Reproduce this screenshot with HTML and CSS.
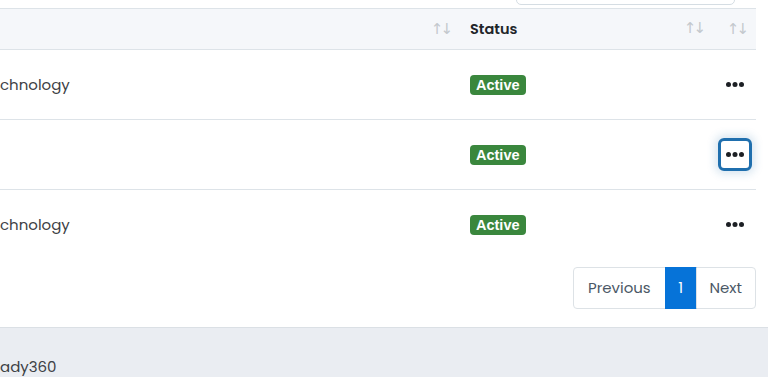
FILE: index.html
```
<!DOCTYPE html>
<html lang="en">
<head>
    <meta charset="UTF-8">
    <title>Departments</title>
    <link rel="stylesheet" href="styles.css">
</head>
<body>
    <div class="content">
        <div class="table-toolbar">
            <input type="search" class="search-input" aria-label="Search">
        </div>

        <table class="data-table">
            <thead>
                <tr>
                    <th class="col-name"><span class="sort-icon">↑↓</span></th>
                    <th class="col-status">Status<span class="sort-icon">↑↓</span></th>
                    <th class="col-action"><span class="sort-icon">↑↓</span></th>
                </tr>
            </thead>
            <tbody>
                <tr>
                    <td class="col-name">chnology</td>
                    <td class="col-status"><span class="badge-active">Active</span></td>
                    <td class="col-action">
                        <button class="action-button">
                            <svg width="18" height="5" viewBox="0 0 18 5"><circle cx="2.5" cy="2.5" r="2.5"/><circle cx="9" cy="2.5" r="2.5"/><circle cx="15.5" cy="2.5" r="2.5"/></svg>
                        </button>
                    </td>
                </tr>
                <tr>
                    <td class="col-name"></td>
                    <td class="col-status"><span class="badge-active">Active</span></td>
                    <td class="col-action">
                        <button class="action-button focused">
                            <svg width="18" height="5" viewBox="0 0 18 5"><circle cx="2.5" cy="2.5" r="2.5"/><circle cx="9" cy="2.5" r="2.5"/><circle cx="15.5" cy="2.5" r="2.5"/></svg>
                        </button>
                    </td>
                </tr>
                <tr>
                    <td class="col-name">chnology</td>
                    <td class="col-status"><span class="badge-active">Active</span></td>
                    <td class="col-action">
                        <button class="action-button">
                            <svg width="18" height="5" viewBox="0 0 18 5"><circle cx="2.5" cy="2.5" r="2.5"/><circle cx="9" cy="2.5" r="2.5"/><circle cx="15.5" cy="2.5" r="2.5"/></svg>
                        </button>
                    </td>
                </tr>
            </tbody>
        </table>

        <div class="pagination">
            <a class="page-link">Previous</a>
            <a class="page-link current">1</a>
            <a class="page-link">Next</a>
        </div>
    </div>

    <footer class="footer">
        <span>ady360</span>
    </footer>
</body>
</html>
```

FILE: styles.css
```
body {
    font-family: Poppins, Inter, 'Noto Sans', sans-serif;
    margin: 0;
    padding: 0;
    background-color: #ffffff;
    color: #212529;
    height: 377px;
    overflow: hidden;
}

.content {
    padding-right: 12px;
}

.table-toolbar {
    height: 8px;
    display: flex;
    justify-content: flex-end;
    align-items: flex-end;
    padding-right: 21px;
}

.search-input {
    width: 219px;
    height: 36px;
    margin-bottom: 3px;
    box-sizing: border-box;
    border: 1px solid #d5dde3;
    border-radius: 5px;
    background: #ffffff;
}

.data-table {
    width: 756px;
    border-collapse: collapse;
    table-layout: fixed;
    font-size: 15px;
}

.data-table thead tr {
    background-color: #f5f7fa;
    border-top: 1px solid #dde3e8;
    border-bottom: 1px solid #dde3e8;
}

.data-table th {
    height: 41px;
    padding: 0 7px 0 10px;
    font-weight: 600;
    font-size: 14.5px;
    text-align: left;
    vertical-align: middle;
    white-space: nowrap;
    box-sizing: border-box;
}

.data-table th .sort-icon {
    float: right;
    color: #c3c8cd;
    font-weight: 400;
    font-size: 15px;
    letter-spacing: -3px;
    padding-right: 3px;
    font-family: 'DejaVu Sans', sans-serif;
}

.col-name {
    width: 460px;
}

.col-status {
    width: 253px;
}

.col-action {
    width: 43px;
}

.data-table td {
    height: 70px;
    padding: 0 10px;
    vertical-align: middle;
    box-sizing: border-box;
    color: #3d4145;
}

.data-table td.col-name {
    padding-left: 0;
}

.data-table tbody tr {
    border-bottom: 1px solid #dde3e8;
}

.data-table tbody tr:last-child {
    border-bottom: none;
}

.data-table td.col-action {
    padding: 0;
    text-align: center;
}

.badge-active {
    display: inline-block;
    background-color: #3a873d;
    color: #ffffff;
    font-family: 'Liberation Sans', Arial, sans-serif;
    font-weight: 700;
    font-size: 14.5px;
    line-height: 20px;
    padding: 0 6px;
    border-radius: 4px;
}

.action-button {
    width: 34px;
    height: 33px;
    border: 3px solid transparent;
    border-radius: 6px;
    background: transparent;
    padding: 0;
    display: inline-flex;
    align-items: center;
    justify-content: center;
    fill: #1c1f24;
    cursor: pointer;
}

.action-button.focused {
    border-color: #1f6fae;
    box-shadow: 0 0 8px 3px rgba(31, 111, 174, 0.18);
}

.pagination {
    display: flex;
    justify-content: flex-end;
    margin-top: 7px;
}

.page-link {
    height: 42px;
    box-sizing: border-box;
    display: flex;
    align-items: center;
    padding: 0 14px;
    font-size: 15px;
    color: #4b5866;
    border: 1px solid #dde2e6;
    margin-left: -1px;
}

.page-link:first-child {
    border-radius: 4px 0 0 4px;
}

.page-link:last-child {
    border-radius: 0 4px 4px 0;
    padding: 0 13px;
}

.page-link.current {
    background-color: #0673d8;
    border-color: #0673d8;
    color: #ffffff;
    padding: 0 12.5px;
}

.footer {
    margin-top: 18px;
    border-top: 1px solid #dbe0e5;
    background-color: #eaedf2;
    height: 60px;
    padding-top: 29px;
    font-size: 15px;
    line-height: 20px;
    color: #3d4145;
}
```
